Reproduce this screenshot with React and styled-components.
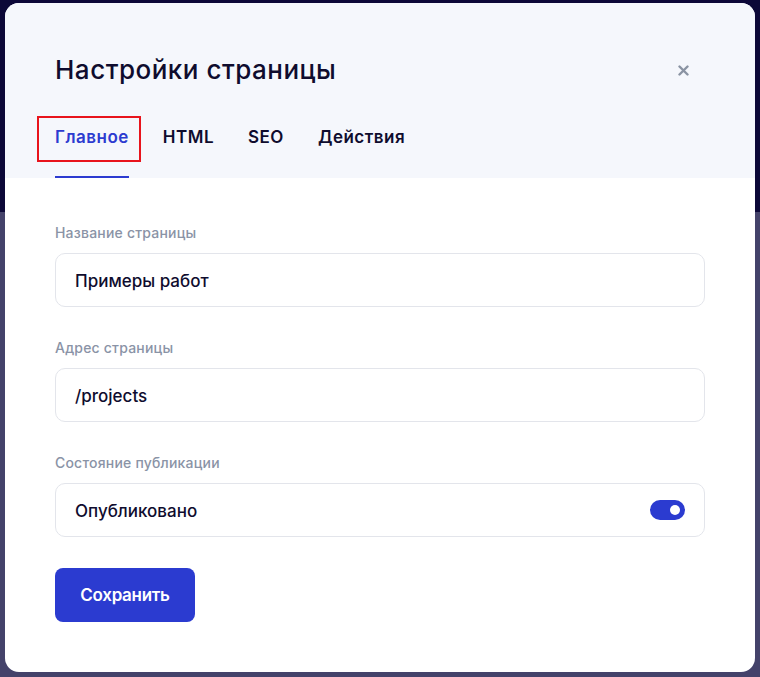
import React, { useState } from "react";
import styled, { createGlobalStyle } from "styled-components";

const Global = createGlobalStyle`
  html, body { margin: 0; padding: 0; }
  body {
    font-family: Inter, "Noto Sans", sans-serif;
    background: linear-gradient(to bottom, #0c0838 0, #0c0838 212px, #44426a 212px, #44426a 100%);
    min-height: 677px;
  }
`;

const Page = styled.div`
  padding: 3px 5px 5px 5px;
  box-sizing: border-box;
  min-height: 677px;
`;

const Modal = styled.div`
  width: 750px;
  background: #ffffff;
  border-radius: 14px;
  overflow: hidden;
`;

const Header = styled.div`
  background: #f5f7fc;
  padding: 51px 50px 0 50px;
`;

const TitleRow = styled.div`
  display: flex;
  align-items: center;
  justify-content: space-between;
`;

const Title = styled.h1`
  margin: 0;
  font-size: 26px;
  line-height: 32px;
  font-weight: 500;
  color: #0f0c2e;
  letter-spacing: 0.5px;
`;

const Close = styled.button`
  border: 0;
  background: transparent;
  padding: 0;
  width: 14px;
  height: 14px;
  margin-right: 15px;
  display: flex;
  align-items: center;
  justify-content: center;
  cursor: pointer;
`;

const Tabs = styled.div`
  display: flex;
  gap: 34px;
  margin-top: 41px;
`;

const Tab = styled.div`
  position: relative;
  font-size: 17px;
  line-height: 20px;
  font-weight: 600;
  letter-spacing: 0.5px;
  color: ${(p) => (p.$active ? "#2c3bd0" : "#0f0c2e")};
  padding-bottom: 29px;
  border-bottom: 2px solid ${(p) => (p.$active ? "#2c3bd0" : "transparent")};
  cursor: pointer;
`;

const Highlight = styled.span`
  position: absolute;
  left: -18px;
  top: -11px;
  width: 104px;
  height: 46px;
  box-sizing: border-box;
  border: 2px solid #e8141c;
  pointer-events: none;
`;

const Body = styled.div`
  padding: 45px 50px 50px 50px;
  display: flex;
  flex-direction: column;
`;

const Field = styled.div`
  display: flex;
  flex-direction: column;
  gap: 11px;
  margin-bottom: 31px;
`;

const Label = styled.label`
  padding-top: 1px;
  font-size: 14px;
  line-height: 18px;
  color: #8a93a6;
  font-weight: 500;
  letter-spacing: 0.2px;
`;

const Box = styled.div`
  height: 54px;
  box-sizing: border-box;
  border: 1px solid #e3e5eb;
  border-radius: 10px;
  padding: 2px 19px 0 19px;
  display: flex;
  align-items: center;
  justify-content: space-between;
  font-size: 17px;
  color: #0f0c2e;
  font-weight: 500;
`;

const Toggle = styled.div`
  width: 35px;
  height: 20px;
  margin-top: -2px;
  border-radius: 10px;
  background: ${(p) => (p.$on ? "#2b3bd0" : "#c5c9d6")};
  display: flex;
  align-items: center;
  justify-content: ${(p) => (p.$on ? "flex-end" : "flex-start")};
  padding: 0 5px;
  box-sizing: border-box;
  cursor: pointer;
`;

const Knob = styled.span`
  width: 10px;
  height: 10px;
  border-radius: 50%;
  background: #fff;
`;

const SaveButton = styled.button`
  align-self: flex-start;
  width: 140px;
  height: 54px;
  border: 0;
  border-radius: 8px;
  background: #2b3bd0;
  color: #fff;
  font-family: inherit;
  font-size: 17px;
  font-weight: 600;
  letter-spacing: -0.3px;
  cursor: pointer;
`;

export default function App() {
  const [tab, setTab] = useState(0);
  const [on, setOn] = useState(true);
  const tabs = ["Главное", "HTML", "SEO", "Действия"];
  return (
    <Page>
      <Global />
      <Modal>
        <Header>
          <TitleRow>
            <Title>Настройки страницы</Title>
            <Close aria-label="Закрыть">
              <svg width="11" height="11" viewBox="0 0 11 11">
                <path d="M1.5 1.5 L9.5 9.5 M9.5 1.5 L1.5 9.5" stroke="#8a93a3" strokeWidth="2.4" strokeLinecap="round" />
              </svg>
            </Close>
          </TitleRow>
          <Tabs>
            {tabs.map((t, i) => (
              <Tab key={t} $active={tab === i} onClick={() => setTab(i)}>
                {t}
                {i === 0 && <Highlight />}
              </Tab>
            ))}
          </Tabs>
        </Header>
        <Body>
          <Field>
            <Label>Название страницы</Label>
            <Box>Примеры работ</Box>
          </Field>
          <Field>
            <Label>Адрес страницы</Label>
            <Box>/projects</Box>
          </Field>
          <Field>
            <Label>Состояние публикации</Label>
            <Box>
              Опубликовано
              <Toggle $on={on} onClick={() => setOn(!on)}>
                <Knob />
              </Toggle>
            </Box>
          </Field>
          <SaveButton>Сохранить</SaveButton>
        </Body>
      </Modal>
    </Page>
  );
}
